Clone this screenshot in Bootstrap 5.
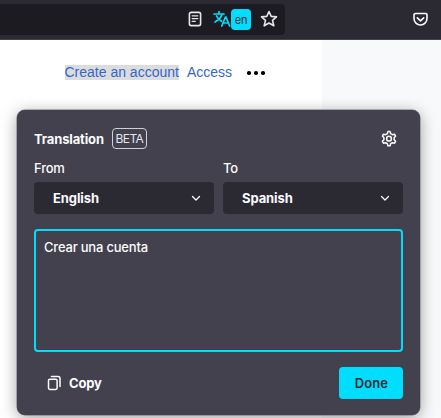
<!DOCTYPE html>
<html lang="en">
<head>
<meta charset="utf-8">
<meta name="viewport" content="width=device-width, initial-scale=1">
<title>Translation</title>
<link href="https://cdn.jsdelivr.net/npm/bootstrap@5.3.0/dist/css/bootstrap.min.css" rel="stylesheet">
<style>
html,body{height:100%}
body{font:500 13px/16px Inter,sans-serif;letter-spacing:-.2px;background:linear-gradient(90deg,#fff 322px,#f8f9fa 322px);color:#fbfbfe}
svg{display:block;flex:none;fill:none;stroke:currentColor;stroke-linecap:round;stroke-linejoin:round}
.toolbar{height:40px;background:#2b2a33;border-bottom:1px solid #42414d;padding:4px 13px 4px 0}
.urlbar{width:285px;height:31px;background:#1c1b22;border-radius:0 4px 4px 0;padding-right:7px;color:#e6e6ea}
.urlbar svg{margin-bottom:1px}
.lang{width:20px;height:21px;border-radius:4px;background:#00ddff;color:#2b2a33;font-size:11px;font-weight:400;line-height:22px;margin-right:9px}
.cyan{color:#00ddff;margin-left:11px}
.links{height:70px;padding:25px 0 0 64.5px;font:14px/15px "Liberation Sans",sans-serif;letter-spacing:0;color:#36c}
.picked{background:#dcdcdc;height:15px}
.dots{gap:3.5px;margin-left:15px;margin-top:6px}
.dots i{width:3.6px;height:3.6px;border-radius:50%;background:#000}
.panel{width:403px;height:305px;margin-left:17px;padding:18px 17px 16px;background:#42414d;border-radius:8px;box-shadow:0 0 0 .5px #77767f,0 3px 16px rgba(0,0,0,.38)}
.title{letter-spacing:-.14px}
.beta{border:1.5px solid #cfcfd8;border-radius:4px;width:35px;height:21px;line-height:19px;font-size:12px;font-weight:400;letter-spacing:-.55px;color:#e4e4ea;margin-left:8px}
.langs{--bs-gutter-x:9px;margin-top:11px}
.label{margin-bottom:6px}
.pick{height:32px;background:#2b2a33;border-radius:4px;padding:0 13px 0 19px;font-weight:700;letter-spacing:-.1px}
.result{height:123px;border:2px solid #00ddff;border-radius:4px;padding:8px;margin-top:15px}
.done{width:64px;height:32px;border-radius:4px;background:#00ddff;color:#2b2a33;font-size:13px;font-weight:600;letter-spacing:.1px;line-height:32px;border:0;padding:0 0 0 1px}
.copy{gap:7px;padding-left:13px}
</style>
<script src="https://cdn.jsdelivr.net/npm/bootstrap@5.3.0/dist/js/bootstrap.bundle.min.js"></script>
</head>
<body class="overflow-hidden">
<header class="toolbar d-flex justify-content-between">
  <div class="urlbar d-flex align-items-center justify-content-end">
    <svg width="14" height="16" viewBox="0 0 14 16" stroke-width="1.6"><rect x="1.4" y="1.4" width="11.2" height="13.2" rx="1.8"/><path d="M4.200 4.800h5.600M4.200 7.600h5.600M4.200 10.400h3" stroke-width="1.300"/></svg>
    <svg class="cyan" width="18" height="18" viewBox="0 0 18 18" stroke-width="1.700" stroke-linecap="butt"><path d="M1 4h10M6 1.500V4M9.200 4C8.200 7.500 5.500 10 2 12M3.500 6c1 2.300 2.800 4 5 5.300M8.800 16l3.600-9H13l3.600 9M10 13h5.400"/></svg>
    <div class="lang text-center">en</div>
    <svg width="18" height="18" viewBox="0 0 18 18" stroke-width="1.600"><path d="m9 1.500 2.200 4.900 5.300.5-4 3.500 1.300 5.400L9 13l-4.800 2.800 1.300-5.400-4-3.500 5.300-.5z"/></svg>
  </div>
  <svg class="align-self-center" width="15" height="15" viewBox="0 0 15 15" stroke-width="1.600"><path d="M2.500 1.500h10a1.500 1.500 0 0 1 1.500 1.500v3.500a6.500 6.500 0 0 1-13 0V3a1.500 1.500 0 0 1 1.500-1.500zM4.300 5.800l3.200 3 3.200-3"/></svg>
</header>
<nav class="links d-flex align-items-start">
  <span class="picked">Create an account</span><span class="ms-2">Access</span>
  <span class="dots d-flex"><i></i><i></i><i></i></span>
</nav>
<main class="panel d-flex flex-column">
  <div class="d-flex align-items-center">
    <strong class="title">Translation</strong><span class="beta text-center">BETA</span>
    <svg class="ms-auto" width="18" height="18" viewBox="0 0 18 18" stroke-width="1.500" style="margin-right:5px"><path d="M7.300 3.700 7.900 1.600h2.200l.6 2.100 1.700 1 2.100-.5 1.100 1.900L14.100 7.700v2l1.500 1.600-1.100 1.900-2.100-.5-1.700 1-.6 2.100H7.900l-.6-2.100-1.700-1-2.100.5-1.100-1.900 1.500-1.600v-2L2.400 6.100l1.100-1.900 2.100.5z"/><circle cx="9" cy="8.700" r="2.400"/></svg>
  </div>
  <div class="row langs">
    <div class="col-6"><div class="label">From</div><div class="pick d-flex align-items-center justify-content-between">English<svg width="10" height="10" viewBox="0 0 10 10" stroke-width="1.300"><path d="m1.500 3.500 3.500 3.500 3.500-3.500"/></svg></div></div>
    <div class="col-6"><div class="label">To</div><div class="pick d-flex align-items-center justify-content-between">Spanish<svg width="10" height="10" viewBox="0 0 10 10" stroke-width="1.300"><path d="m1.500 3.500 3.500 3.500 3.500-3.500"/></svg></div></div>
  </div>
  <div class="result">Crear una cuenta</div>
  <div class="d-flex align-items-center justify-content-between mt-auto">
    <div class="copy d-flex align-items-center fw-bold"><svg width="15" height="16" viewBox="0 0 15 16" stroke-width="1.500"><rect x="1.500" y="4.200" width="8.600" height="10.200" rx="1.400"/><path d="M4.500 1.500h6.500a2 2 0 0 1 2 2v8"/></svg>Copy</div>
    <button class="done">Done</button>
  </div>
</main>
</body>
</html>
